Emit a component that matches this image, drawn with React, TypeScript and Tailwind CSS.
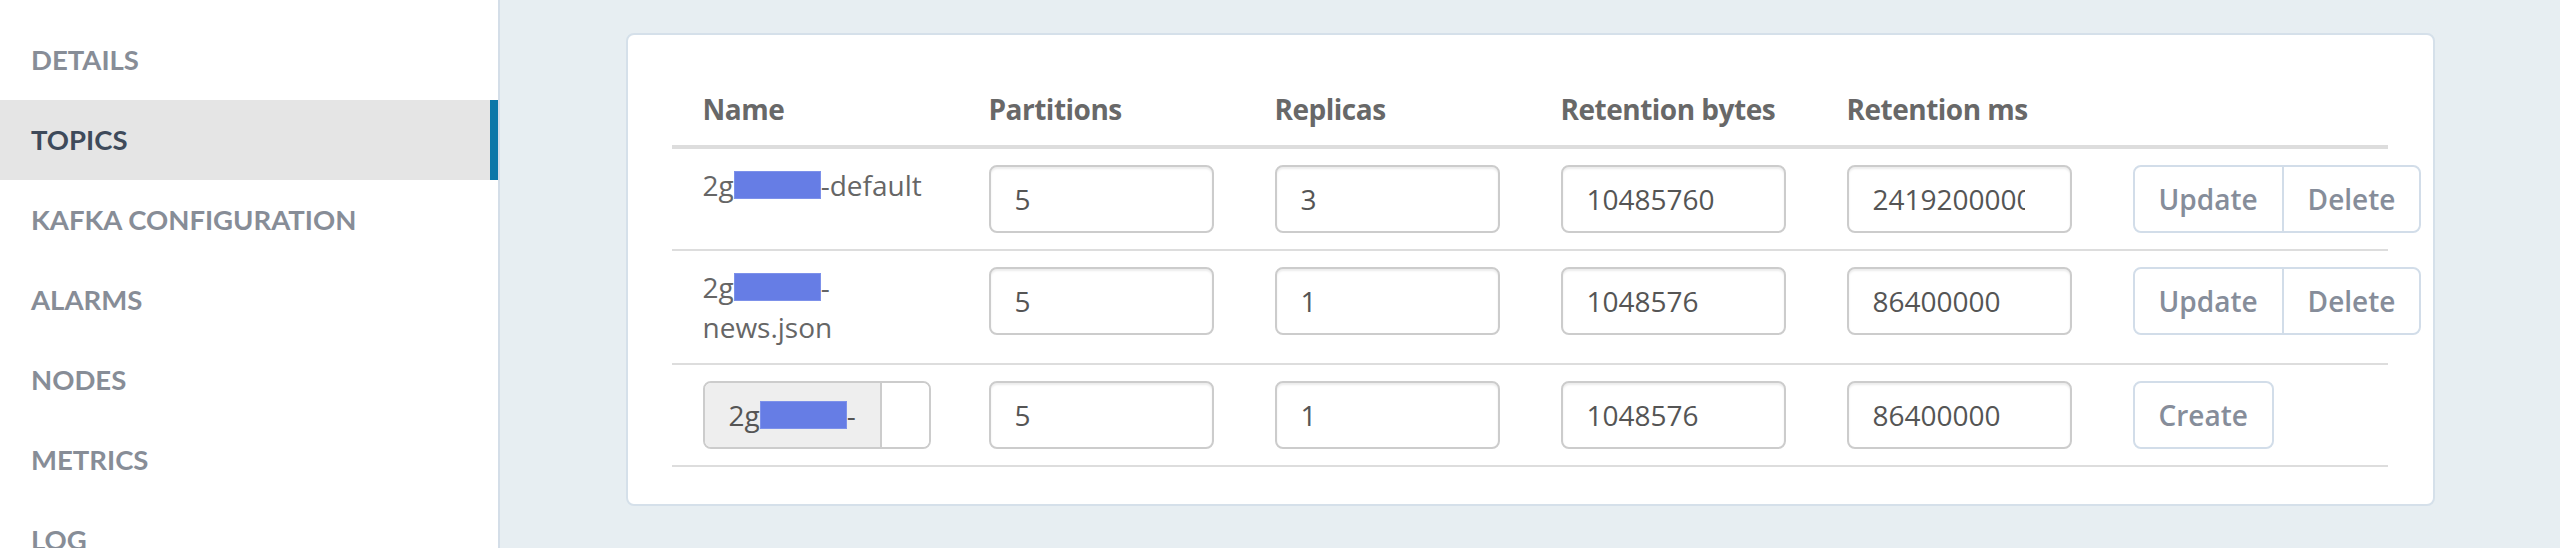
import React from "react";

const navItems = [
  "DETAILS",
  "TOPICS",
  "KAFKA CONFIGURATION",
  "ALARMS",
  "NODES",
  "METRICS",
  "LOG",
];

const cols =
  "grid grid-cols-[301px_286px_286px_286px_286px_minmax(0,1fr)] items-start";

function Redacted() {
  return (
    <span className="inline-block h-[28px] w-[87px] border border-[#7d91ea] bg-[#667de5] align-[-3px]" />
  );
}

function Field({ value }: { value: string }) {
  return (
    <div className="flex h-[68px] w-[225px] items-center rounded-[8px] border-2 border-[#cccccc] bg-white px-[24px] text-[28px] text-[#555] shadow-[inset_0_2px_2px_rgba(0,0,0,0.075)]">
      <div className="w-[152px] overflow-hidden whitespace-nowrap">{value}</div>
    </div>
  );
}

function Btn({ label, className = "" }: { label: string; className?: string }) {
  return (
    <button
      className={`h-[64px] bg-white px-[24px] text-[28px] font-semibold text-[#868d9a] ${className}`}
    >
      {label}
    </button>
  );
}

function Actions({ create }: { create?: boolean }) {
  if (create) {
    return (
      <div className="inline-flex rounded-[8px] border-2 border-[#d2dde9]">
        <Btn label="Create" className="rounded-[8px]" />
      </div>
    );
  }
  return (
    <div className="inline-flex divide-x-2 divide-[#d2dde9] whitespace-nowrap rounded-[8px] border-2 border-[#d2dde9]">
      <Btn label="Update" className="rounded-l-[8px]" />
      <Btn label="Delete" className="rounded-r-[8px]" />
    </div>
  );
}

type Topic = {
  name: React.ReactNode;
  partitions: string;
  replicas: string;
  bytes: string;
  ms: string;
  create?: boolean;
};

const rows: Topic[] = [
  {
    name: (
      <span>
        2g
        <Redacted />
        -default
      </span>
    ),
    partitions: "5",
    replicas: "3",
    bytes: "10485760",
    ms: "2419200000",
  },
  {
    name: (
      <span>
        2g
        <Redacted />-
        <br />
        news.json
      </span>
    ),
    partitions: "5",
    replicas: "1",
    bytes: "1048576",
    ms: "86400000",
  },
  {
    name: (
      <div className="flex h-[68px] w-[228px] overflow-hidden rounded-[8px] border-2 border-[#cccccc]">
        <div className="flex items-center whitespace-nowrap border-r-2 border-[#cccccc] bg-[#eeeeee] px-[24px] text-[#555]">
          2g
          <Redacted />-
        </div>
        <div className="flex-1 bg-white" />
      </div>
    ),
    partitions: "5",
    replicas: "1",
    bytes: "1048576",
    ms: "86400000",
    create: true,
  },
];

export default function App() {
  return (
    <div className="flex h-screen overflow-hidden bg-[#e7eef2]">
      <aside
        className="w-[500px] shrink-0 border-r-2 border-[#d4dee8] bg-white pt-5"
        style={{ fontFamily: "Lato, 'Open Sans', sans-serif" }}
      >
        {navItems.map((item) => (
          <div
            key={item}
            className={
              item === "TOPICS"
                ? "flex h-[80px] items-center border-r-[8px] border-[#0a77a8] bg-[#e5e5e5] pl-[31px] text-[27.5px] font-bold text-[#3e4a5a]"
                : "flex h-[80px] items-center pl-[31px] text-[27.5px] font-bold text-[#878d97]"
            }
          >
            {item}
          </div>
        ))}
      </aside>

      <main
        className="flex-1 pt-[33px]"
        style={{ fontFamily: "'Open Sans', 'Noto Sans', sans-serif" }}
      >
        <div className="mx-auto w-[1809px] rounded-[8px] border-2 border-[#d5e0ea] bg-white pb-[37px] pl-[44px] pr-[45px] pt-[38px]">
          <div className={`${cols} border-b-4 border-[#dddddd] text-[28px] leading-[40px] font-bold tracking-[-0.5px] text-[#686868]`}>
            <div className="py-4 pl-[31px]">Name</div>
            <div className="py-4 pl-4">Partitions</div>
            <div className="py-4 pl-4">Replicas</div>
            <div className="py-4 pl-4">Retention bytes</div>
            <div className="py-4 pl-4">Retention ms</div>
            <div className="py-4 pl-4" />
          </div>

          {rows.map((r, i) => (
            <div
              key={i}
              className={`${cols} border-b-2 border-[#dddddd] text-[28px] leading-[40px] text-[#666]`}
            >
              <div className="py-4 pl-[31px]">{r.name}</div>
              <div className="py-4 pl-4">
                <Field value={r.partitions} />
              </div>
              <div className="py-4 pl-4">
                <Field value={r.replicas} />
              </div>
              <div className="py-4 pl-4">
                <Field value={r.bytes} />
              </div>
              <div className="py-4 pl-4">
                <Field value={r.ms} />
              </div>
              <div className="py-4 pl-4">
                <Actions create={r.create} />
              </div>
            </div>
          ))}
        </div>
      </main>
    </div>
  );
}
